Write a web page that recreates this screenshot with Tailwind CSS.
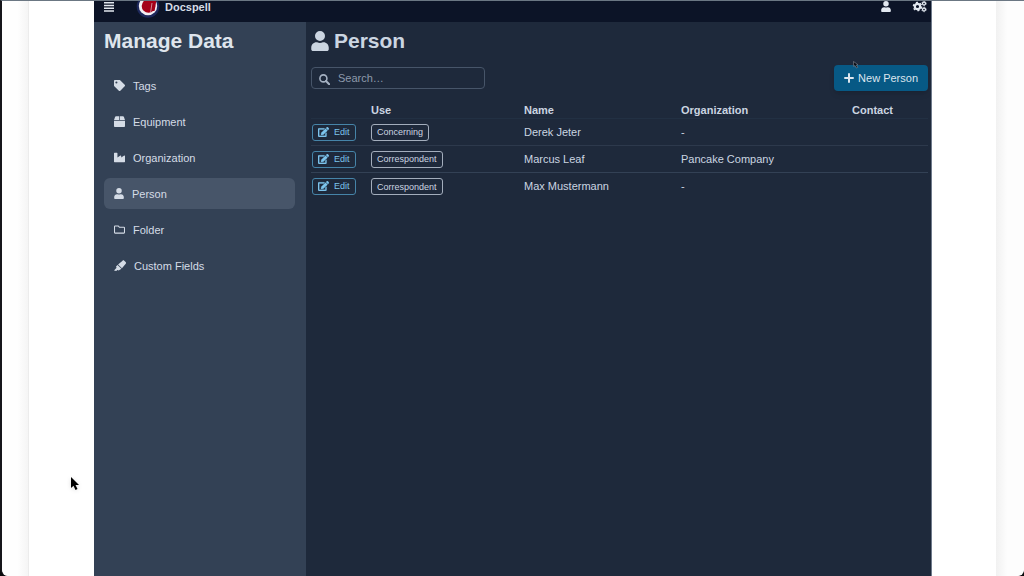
<!DOCTYPE html>
<html lang="en">
<head>
<meta charset="utf-8">
<meta name="viewport" content="width=device-width, initial-scale=1">
<title>Docspell - Manage Data</title>
<script src="https://cdn.jsdelivr.net/npm/@tailwindcss/browser@4"></script>
</head>
<body class="bg-[#0b0b0d] font-['Liberation_Sans',Arial,sans-serif] text-[11px] leading-4">
<svg class="hidden" aria-hidden="true">
  <symbol id="user" viewBox="0 0 448 512"><path fill="currentColor" d="M224 256a128 128 0 1 0 0-256 128 128 0 0 0 0 256zm90 32h-17a174 174 0 0 1-146 0h-17C60 288 0 348 0 422v42c0 27 21 48 48 48h352c27 0 48-21 48-48v-42c0-74-60-134-134-134z"/></symbol>
  <symbol id="edit" viewBox="0 0 576 512"><path fill="currentColor" stroke="currentColor" stroke-width="14" d="M402.600 83.200l90.200 90.200c3.800 3.800 3.800 10 0 13.800L274.400 405.600l-92.800 10.300c-12.400 1.400-22.900-9.100-21.500-21.500l10.300-92.800L388.800 83.200c3.800-3.800 10-3.800 13.800 0zm162-22.900l-48.800-48.800c-15.200-15.200-39.900-15.200-55.200 0l-35.400 35.400c-3.800 3.800-3.800 10 0 13.800l90.200 90.200c3.800 3.800 10 3.800 13.800 0l35.400-35.400c15.200-15.300 15.200-40 0-55.200zM384 346.200V448H64V128h229.800c3.200 0 6.200-1.300 8.500-3.500l40-40c7.600-7.600 2.200-20.500-8.500-20.500H48C21.500 64 0 85.500 0 112v352c0 26.500 21.500 48 48 48h352c26.500 0 48-21.500 48-48V306.200c0-10.700-12.900-16-20.500-8.500l-40 40c-2.200 2.300-3.500 5.300-3.500 8.500z"/></symbol>
</svg>
<div class="min-h-screen border-t border-l-2 border-t-[#6b7783] border-l-[#15151a] rounded-b-lg bg-[#fdfdfd] flex">
  <div class="w-[27px] shrink-0 rounded-bl-md border-r border-[#ececec] bg-linear-to-r from-[#fefefe] from-60% to-[#f5f5f5]"></div>
  <div class="w-[65px] shrink-0 bg-white"></div>

  <div class="flex-1 min-w-0 flex flex-col border-r border-[#6f7a8b] bg-[#1e293b] text-[#cbd5e1]">
    <header class="h-[21px] shrink-0 bg-[#0c1427] flex items-start justify-between overflow-hidden">
      <div class="flex items-start h-full">
        <button type="button" aria-label="Menu" class="pl-[10px] pt-px text-[#e2e8f0]">
          <svg class="w-[10px] h-[10px]" viewBox="0 0 10 10"><path stroke="currentColor" stroke-width="1.500" d="M0 .8h10M0 3.500h10M0 6.300h10M0 9.100h10"/></svg>
        </button>
        <a href="#" class="flex items-start ml-[22px] font-bold text-[#d5dce6]">
          <svg class="w-6 h-[20px]" viewBox="0 0 24 20"><circle cx="12" cy="5.500" r="11.300" fill="#1d285b"/><circle cx="12" cy="5" r="9.200" fill="#f3eff4"/><circle cx="12.500" cy="5" r="6.800" fill="#a50018"/><path fill="#a50018" d="M16.500-1h4l-2 11h-3z"/><path d="M14.500 12l1.500-10" stroke="#d9a9b4" stroke-width=".8"/></svg>
          <span class="-mt-0.5 ml-[5px]">Docspell</span>
        </a>
      </div>
      <div class="flex items-start gap-[20px] pr-1 text-[#e2e8f0]">
        <button type="button" aria-label="User"><svg class="w-[12px] h-[11px]"><use href="#user"/></svg></button>
        <button type="button" aria-label="Settings"><svg class="w-[15px] h-3" viewBox="0 0 15 12"><g fill="none" stroke="currentColor"><circle cx="5.500" cy="5.500" r="2.700" stroke-width="2.200"/><circle cx="5.500" cy="5.500" r="4.100" stroke-width="1.400" stroke-dasharray="2.150 2.150"/><circle cx="12" cy="2.500" r="1.500" stroke-width="1.300"/><circle cx="12" cy="8.500" r="1.500" stroke-width="1.300"/><circle cx="12" cy="2.500" r="2.300" stroke-width=".6" stroke-dasharray="1.200 1.200"/><circle cx="12" cy="8.500" r="2.300" stroke-width=".6" stroke-dasharray="1.200 1.200"/></g></svg></button>
      </div>
    </header>

    <div class="flex flex-1">
      <aside class="w-[212px] shrink-0 bg-[#334155] px-[10px] pt-[5px]">
        <h1 class="text-[21px] leading-7 font-bold text-[#dfe5ed]">Manage Data</h1>
        <nav class="mt-[15px] flex flex-col gap-[5px] mr-px text-[#d5dce6]">
          <a href="#" class="flex items-center h-[31px] px-[10px] gap-2 rounded-md"><svg class="w-[11px] h-[11px]" viewBox="0 0 512 512"><path fill="currentColor" fill-rule="evenodd" d="M0 252V48C0 21 21 0 48 0h204c13 0 25 5 34 14l212 212c19 19 19 49 0 68L294 498c-19 19-49 19-68 0L14 286c-9-9-14-21-14-34zM112 64a48 48 0 1 0 0 96 48 48 0 0 0 0-96z"/></svg>Tags</a>
          <a href="#" class="flex items-center h-[31px] px-[10px] gap-2 rounded-md"><svg class="w-[11px] h-[11px]" viewBox="0 0 512 512"><path fill="currentColor" d="M510 184L463 44c-6-20-25-33-46-33H272v173zM240 11H95c-21 0-40 13-46 33L2 184h238zM0 216v248c0 27 21 48 48 48h416c27 0 48-21 48-48V216z"/></svg>Equipment</a>
          <a href="#" class="flex items-center h-[31px] px-[10px] gap-2 rounded-md"><svg class="w-[11px] h-[11px]" viewBox="0 0 512 512"><path fill="currentColor" d="M475 164L336 252v-68c0-19-21-30-37-20L160 252V56c0-13-11-24-24-24H24C11 32 0 43 0 56v400c0 13 11 24 24 24h464c13 0 24-11 24-24V184c0-19-21-30-37-20z"/></svg>Organization</a>
          <a href="#" aria-current="page" class="flex items-center h-[31px] px-[10px] gap-2 rounded-md bg-[#475569]"><svg class="w-[10px] h-[11px]"><use href="#user"/></svg>Person</a>
          <a href="#" class="flex items-center h-[31px] px-[10px] gap-2 rounded-md"><svg class="w-[11px] h-[11px]" viewBox="0 0 512 512"><path fill="none" stroke="currentColor" stroke-width="48" stroke-linejoin="round" d="M24 112c0-14 10-24 24-24h146l64 64h206c14 0 24 10 24 24v224c0 14-10 24-24 24H48c-14 0-24-10-24-24z"/></svg>Folder</a>
          <a href="#" class="flex items-center h-[31px] px-[10px] gap-2 rounded-md"><svg class="w-3 h-3" viewBox="0 0 544 512"><path fill="currentColor" d="M527 80l-63-63c-21-21-53-23-76-4L185 184l176 176L532 156c18-23 16-55-5-76zM161 206l-57 58c-10 10-13 24-7 37l19 39L0 455l99 33 55-55 39 19c13 6 27 3 37-7l108-63z"/></svg>Custom Fields</a>
        </nav>
      </aside>

      <main class="flex-1 min-w-0 pl-[5px] pr-[3px] pt-[5px]">
        <h2 class="flex items-center gap-[5px] text-[21px] leading-7 font-bold"><svg class="w-[18px] h-5"><use href="#user"/></svg>Person</h2>
        <div class="mt-[10px] flex items-center justify-between">
          <label class="relative block w-[174px]">
            <svg class="absolute left-2 top-[7px] w-[11px] h-[11px] text-[#a5b1c2]" viewBox="0 0 11 11"><g fill="none" stroke="currentColor"><circle cx="4.400" cy="4.400" r="3.500" stroke-width="1.600"/><path d="M7 7l3.200 3.200" stroke-width="2" stroke-linecap="round"/></g></svg>
            <input type="text" aria-label="Search" placeholder="Search…" class="block w-full h-[22px] pl-[26px] pr-2 rounded-sm border border-[#475569] bg-[#1e293b] placeholder:text-[#8d99ab]">
          </label>
          <button type="button" class="h-[26px] px-[10px] flex items-center gap-1 rounded-sm bg-[#075985] text-[#dde6ee] shadow-md"><svg class="w-[10px] h-[10px]" viewBox="0 0 10 10"><path stroke="currentColor" stroke-width="2" stroke-linecap="round" d="M5 1v8M1 5h8"/></svg>New Person</button>
        </div>
        <table class="mt-[9px] w-full table-fixed text-left">
          <colgroup><col class="w-[60px]"><col class="w-[153px]"><col class="w-[157px]"><col class="w-[171px]"><col></colgroup>
          <thead><tr class="h-[18px]"><td></td><th class="pt-0.5">Use</th><th class="pt-0.5">Name</th><th class="pt-0.5">Organization</th><th class="pt-0.5">Contact</th></tr></thead>
          <tbody>
            <tr class="h-[27px] border-t border-[#223043]"><td><button type="button" class="flex items-center ml-px h-[17px] px-[5px] gap-[5px] rounded-[3px] border border-[#4684a8] text-[9px] leading-3 text-[#7cc4ec]"><svg class="w-[11px] h-[10px]"><use href="#edit"/></svg>Edit</button></td><td><span class="inline-flex items-center h-[17px] px-[5px] rounded-[3px] border border-[#a3adbc] text-[9px] leading-3 align-middle">Concerning</span></td><td>Derek Jeter</td><td>-</td><td></td></tr>
            <tr class="h-[27px] border-t border-[#2d394c]"><td><button type="button" class="flex items-center ml-px h-[17px] px-[5px] gap-[5px] rounded-[3px] border border-[#4684a8] text-[9px] leading-3 text-[#7cc4ec]"><svg class="w-[11px] h-[10px]"><use href="#edit"/></svg>Edit</button></td><td><span class="inline-flex items-center h-[17px] px-[5px] rounded-[3px] border border-[#a3adbc] text-[9px] leading-3 align-middle">Correspondent</span></td><td>Marcus Leaf</td><td>Pancake Company</td><td></td></tr>
            <tr class="h-[27px] border-t border-[#334155]"><td><button type="button" class="flex items-center ml-px h-[17px] px-[5px] gap-[5px] rounded-[3px] border border-[#4684a8] text-[9px] leading-3 text-[#7cc4ec]"><svg class="w-[11px] h-[10px]"><use href="#edit"/></svg>Edit</button></td><td><span class="inline-flex items-center h-[17px] px-[5px] rounded-[3px] border border-[#a3adbc] text-[9px] leading-3 align-middle">Correspondent</span></td><td>Max Mustermann</td><td>-</td><td></td></tr>
          </tbody>
        </table>
      </main>
    </div>
  </div>

  <div class="w-16 shrink-0 bg-white"></div>
  <div class="w-7 shrink-0 rounded-br-md bg-linear-to-r from-[#f1f1f1] to-[#fdfdfd] to-40%"></div>
</div>

<!-- Mouse pointers -->
<svg class="absolute left-[71px] top-[477px] w-[10px] h-[14px] drop-shadow-sm" viewBox="0 0 10 14" aria-hidden="true"><path fill="#000" d="M0 0v11l2.500-2.200L4.500 13l2-.9-2-4H8z"/></svg>
<svg class="absolute left-[853px] top-[61px] w-[6px] h-[8px]" viewBox="0 0 6 8" aria-hidden="true"><path fill="#080b12" stroke="#8a8f99" stroke-width=".6" d="M.5.5l.2 5 1.300-1 1.500 2.500 1.200-.7-1.300-2.300 1.500-.3z"/></svg>
</body>
</html>
